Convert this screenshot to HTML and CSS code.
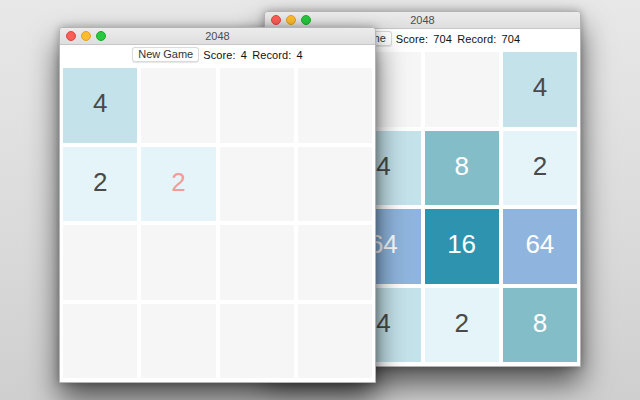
FILE: index.html
```html
<!DOCTYPE html>
<html>
<head>
<meta charset="utf-8">
<link rel="stylesheet" href="styles.css">
</head>
<body>
<div class="desktop">
  <div class="window back">
    <div class="titlebar">
      <div class="lights"><span class="light red"></span><span class="light yellow"></span><span class="light green"></span></div>
      <div class="title">2048</div>
    </div>
    <div class="toolbar">
      <button class="btn">New Game</button>
      <span class="score">Score: 704 Record: 704</span>
    </div>
    <div class="board">
      <div class="tile"></div><div class="tile"></div><div class="tile"></div><div class="tile t4">4</div>
      <div class="tile t2">2</div><div class="tile t4">4</div><div class="tile t8">8</div><div class="tile t2">2</div>
      <div class="tile t8">8</div><div class="tile t64">64</div><div class="tile t16">16</div><div class="tile t64">64</div>
      <div class="tile t2">2</div><div class="tile t4">4</div><div class="tile t2">2</div><div class="tile t8">8</div>
    </div>
  </div>
  <div class="window front">
    <div class="titlebar">
      <div class="lights"><span class="light red"></span><span class="light yellow"></span><span class="light green"></span></div>
      <div class="title">2048</div>
    </div>
    <div class="toolbar">
      <button class="btn">New Game</button>
      <span class="score">Score: 4 Record: 4</span>
    </div>
    <div class="board">
      <div class="tile t4">4</div><div class="tile"></div><div class="tile"></div><div class="tile"></div>
      <div class="tile t2">2</div><div class="tile t2 new">2</div><div class="tile"></div><div class="tile"></div>
      <div class="tile"></div><div class="tile"></div><div class="tile"></div><div class="tile"></div>
      <div class="tile"></div><div class="tile"></div><div class="tile"></div><div class="tile"></div>
    </div>
  </div>
</div>
</body>
</html>
```
FILE: styles.css
```css
html, body {
  margin: 0;
  padding: 0;
}
body {
  width: 640px;
  height: 400px;
  overflow: hidden;
  background: linear-gradient(#e8e8e8, #dadada 60%, #cfcfcf);
  font-family: "Liberation Sans", Arial, sans-serif;
}
.desktop {
  position: relative;
  width: 640px;
  height: 400px;
}
.window {
  position: absolute;
  width: 317px;
  height: 356px;
  box-sizing: border-box;
  background: #fff;
  border: 1px solid #b4b4b4;
  border-radius: 4px 4px 0 0;
  box-shadow: 0 16px 30px rgba(0, 0, 0, 0.62), 0 0 8px rgba(0, 0, 0, 0.28);
  display: flex;
  flex-direction: column;
  overflow: hidden;
}
.back {
  left: 264px;
  top: 11px;
}
.front {
  left: 59px;
  top: 27px;
}
.titlebar {
  position: relative;
  height: 16px;
  flex: none;
  background: linear-gradient(#ececec, #dedede);
  border-bottom: 1px solid #c6c6c6;
  display: flex;
  align-items: center;
  justify-content: center;
}
.lights {
  position: absolute;
  left: 6px;
  top: 3px;
  display: flex;
  gap: 5px;
}
.light {
  width: 10px;
  height: 10px;
  border-radius: 50%;
  box-sizing: border-box;
}
.red { background: #fc5f57; border: 0.5px solid #e0443e; }
.yellow { background: #fdbc2e; border: 0.5px solid #dea123; }
.green { background: #28c840; border: 0.5px solid #1aab29; }
.title {
  font-size: 11px;
  color: #4d4d4d;
}
.toolbar {
  flex: none;
  height: 15px;
  padding: 2px 0 6px;
  display: flex;
  align-items: center;
  justify-content: center;
  gap: 4px;
}
.btn {
  height: 15px;
  width: 67px;
  padding: 0;
  font-family: inherit;
  font-size: 11px;
  color: #333;
  background: #fff;
  border: 1px solid #dadada;
  border-radius: 3px;
  box-shadow: 0 0.5px 1px rgba(0, 0, 0, 0.1);
  line-height: 13px;
}
.score {
  font-size: 11px;
  color: #111;
  word-spacing: 2px;
  letter-spacing: 0.1px;
}
.board {
  flex: none;
  margin: 0 3px;
  height: 310px;
  display: grid;
  grid-template-columns: repeat(4, 1fr);
  grid-template-rows: repeat(4, 1fr);
  gap: 4px;
}
.tile {
  background: #f6f6f6;
  display: flex;
  align-items: center;
  justify-content: center;
  font-size: 26px;
  color: #4a4a4a;
  padding-bottom: 3px;
}
.t2 { background: #e5f4f9; }
.t4 { background: #c4e2ea; }
.t8 { background: #83bec8; color: #fff; }
.t16 { background: #2e93ae; color: #fff; }
.t64 { background: #8fb5de; color: #fff; }
.new { color: #f59a9a; }
```
